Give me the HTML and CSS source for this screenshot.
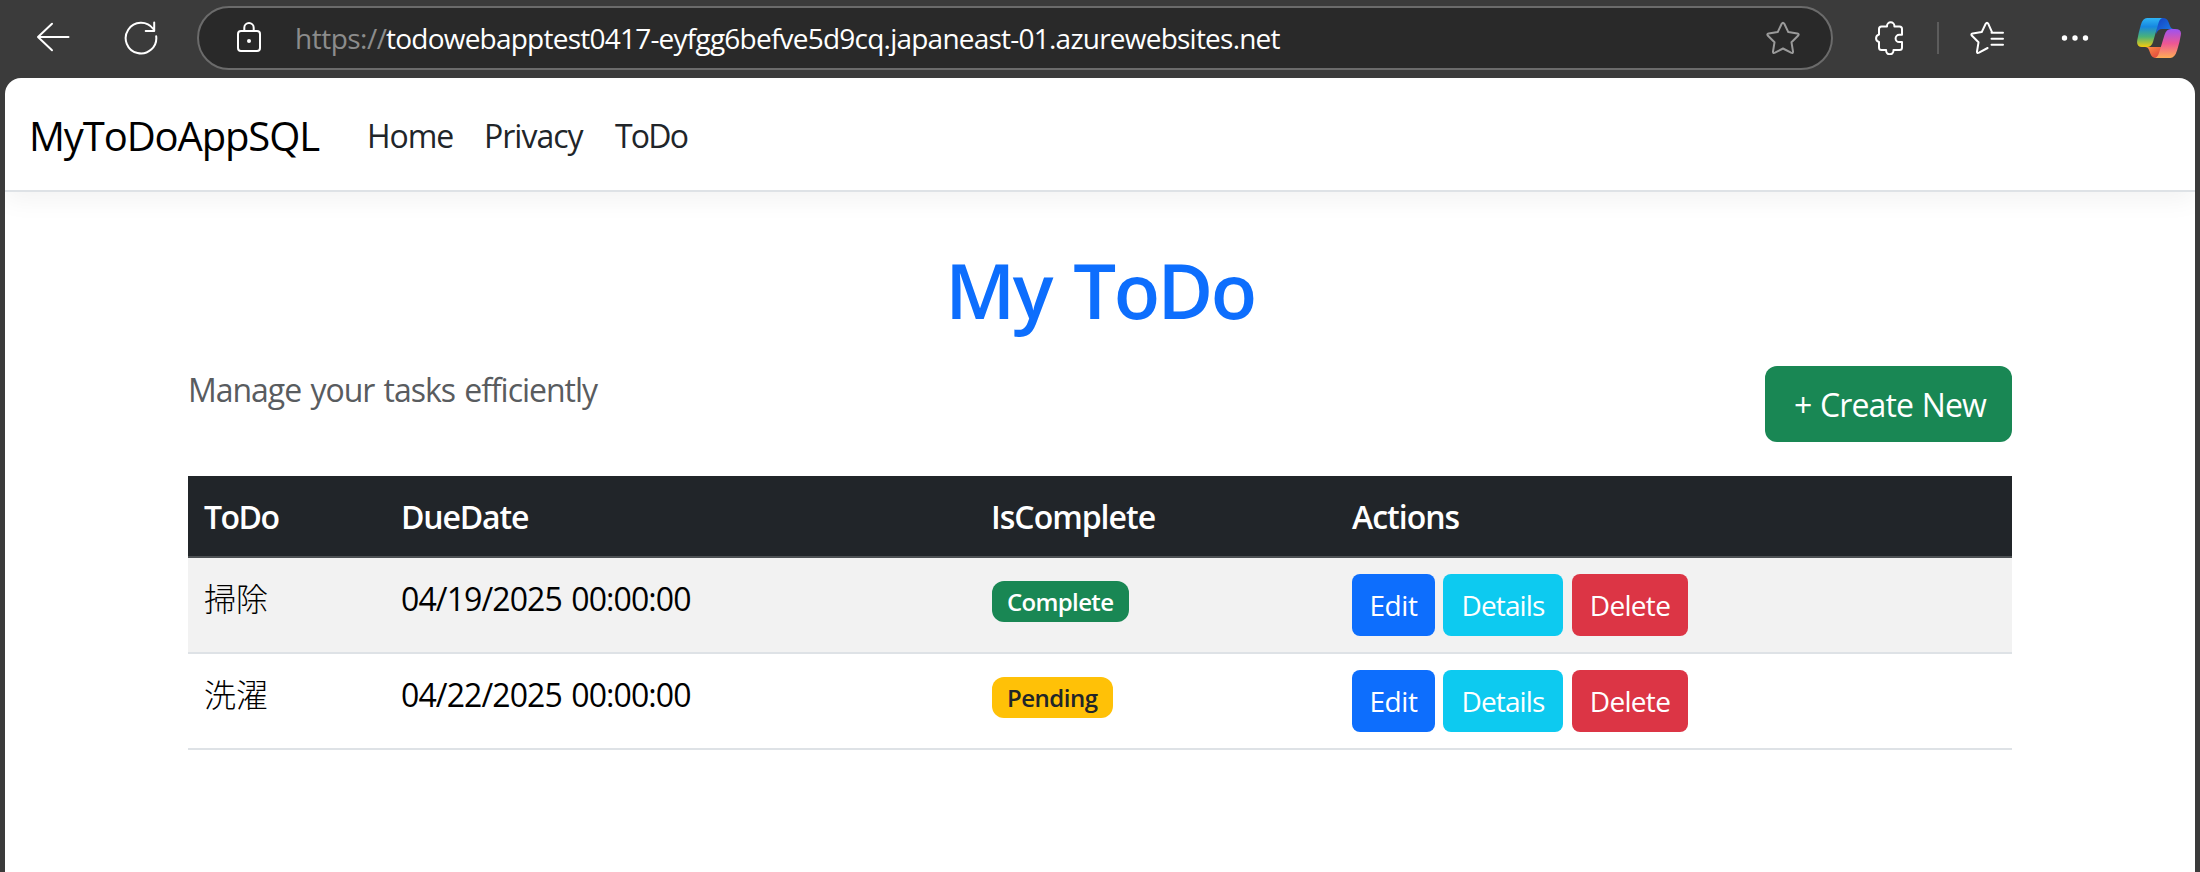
FILE: index.html
```html
<!DOCTYPE html>
<html lang="en">
<head>
<meta charset="utf-8">
<title>My ToDo</title>
<link rel="stylesheet" href="styles.css">
</head>
<body>
<div class="toolbar">
  <svg class="icon back" viewBox="0 0 34 32"><path d="M16 1.800 2 15l14 13.200M2 15h30.500"/></svg>
  <svg class="icon reload" viewBox="0 0 34 34"><path d="M32.200 15.300A15.300 15.300 0 1 1 29.300 8M30.200 1.500V10h-8.500"/></svg>
  <div class="address">
    <svg class="icon lock" viewBox="0 0 26 32"><rect x="2" y="9" width="22" height="20" rx="3"/><path d="M8.300 9V5.700a4.700 4.700 0 0 1 9.400 0V9"/><circle class="dot" cx="13" cy="19" r="2"/></svg>
    <span class="scheme">https://</span><span class="host">todowebapptest0417-eyfgg6befve5d9cq.japaneast-01.azurewebsites.net</span>
    <svg class="icon star" viewBox="0 0 34 34"><path d="M15.700 2.800q1.300-2.200 2.600 0l4 8.300 9 1.400q2.300.5.700 2.300l-6.500 6.500 1.500 9q.2 2.400-2 1.400l-8-4.200-8 4.200q-2.200 1-2-1.400l1.500-9L2 14.800Q.4 13 2.700 12.500l9-1.400z"/></svg>
  </div>
  <svg class="icon puzzle" viewBox="0 0 30 34"><path d="M5 8q0-2.500 2.500-2.500H13V5a3.700 3.700 0 0 1 7.400 0v.5h5.100Q28 5.500 28 8v5.800h-2.800a3.600 3.600 0 0 0 0 7.200H28v5.500q0 2.500-2.500 2.500h-6v.6a3.700 3.700 0 0 1-7.400 0V29H7.500Q5 29 5 26.500V21a3.800 3.800 0 0 1 0-7.400z"/></svg>
  <span class="divider"></span>
  <svg class="icon favorites" viewBox="0 0 34 34"><path d="M22 11.100 18.300 2.800q-1.300-2.200-2.600 0l-4 8.300-9 1.400q-2.300.5-.7 2.300l6.500 6.500L7 30.500q-.2 2.200 2 1.200l8.600-4.700M21.500 11.800H33M21.500 17.700H33M21.500 23.700H33"/></svg>
  <svg class="more" viewBox="0 0 28 6"><circle cx="3.500" cy="3" r="2.700"/><circle cx="14" cy="3" r="2.700"/><circle cx="24.500" cy="3" r="2.700"/></svg>
  <svg class="copilot" viewBox="0 0 44 40">
    <defs>
      <linearGradient id="blue" x1="0" y1="0" x2="0" y2="1"><stop offset="0" stop-color="#2fb4f5"/><stop offset=".3" stop-color="#1688e0"/><stop offset=".65" stop-color="#4bb277"/><stop offset="1" stop-color="#f5cb0c"/></linearGradient>
      <linearGradient id="navy" x1="0" y1="0" x2="1" y2="1"><stop offset="0" stop-color="#1540c0"/><stop offset="1" stop-color="#1b83ea"/></linearGradient>
      <linearGradient id="pink" x1="0" y1="0" x2="0" y2="1"><stop offset="0" stop-color="#9c52f2"/><stop offset=".5" stop-color="#ee5793"/><stop offset="1" stop-color="#ffad55"/></linearGradient>
      <linearGradient id="red" x1="0" y1="0" x2="1" y2="1"><stop offset="0" stop-color="#ff9147"/><stop offset="1" stop-color="#dc3b3b"/></linearGradient>
    </defs>
    <path fill="url(#navy)" d="M20 0h6q4 0 5.500 4l1.500 4q1 3 4 3H25q-4 0-6 5z"/>
    <path fill="url(#red)" d="M8 29q3 0 4 3l1.500 4q1.500 4 5.500 4h3l4-11z"/>
    <path fill="url(#blue)" d="M10 0h16q-3 0-4.500 5L16 24q-1.500 5-6 5H5q-6 0-4.700-7 1.200-7 3.500-15Q5.800 0 10 0z"/>
    <path fill="url(#pink)" d="M34 11h4q7 0 5.800 6-1 7-3.600 15-2.400 8-7 8H17q3.500 0 5-5l5.500-18q1.700-6 6.500-6z"/>
  </svg>
</div>
<div class="page">
  <nav class="navbar">
    <a class="brand">MyToDoAppSQL</a>
    <a class="link home">Home</a>
    <a class="link privacy">Privacy</a>
    <a class="link todo">ToDo</a>
  </nav>
  <main class="container">
    <h1 class="title">My ToDo</h1>
    <div class="intro">
      <p class="lead">Manage your tasks efficiently</p>
      <a class="create">+ Create New</a>
    </div>
    <table class="table">
      <thead>
        <tr><th class="col-todo">ToDo</th><th class="col-due">DueDate</th><th class="col-state">IsComplete</th><th class="col-actions">Actions</th></tr>
      </thead>
      <tbody>
        <tr class="striped"><td class="kanji">掃除</td><td class="date">04/19/2025 00:00:00</td><td><span class="badge complete">Complete</span></td>
          <td><div class="actions"><a class="btn edit">Edit</a><a class="btn details">Details</a><a class="btn delete">Delete</a></div></td></tr>
        <tr><td class="kanji">洗濯</td><td class="date">04/22/2025 00:00:00</td><td><span class="badge pending">Pending</span></td>
          <td><div class="actions"><a class="btn edit">Edit</a><a class="btn details">Details</a><a class="btn delete">Delete</a></div></td></tr>
      </tbody>
    </table>
  </main>
</div>
</body>
</html>
```
FILE: styles.css
```css
* { box-sizing: border-box; }
body {
  margin: 0;
  height: 872px;
  overflow: hidden;
  display: flex;
  flex-direction: column;
  background: #3b3b3b;
  color: #212529;
  font-family: "Open Sans", "Noto Sans CJK JP", sans-serif;
  font-size: 32px;
  line-height: 48px;
}
.toolbar { height: 78px; flex: none; display: flex; align-items: center; padding-bottom: 2px; }
.toolbar svg, .divider { flex: none; }
.icon { fill: none; stroke: #fff; stroke-width: 2; stroke-linecap: round; stroke-linejoin: round; }
.back { width: 34px; height: 32px; margin-left: 36px; }
.reload { width: 34px; height: 34px; margin-left: 54px; }
.address {
  width: 1636px; height: 64px; margin-left: 39px; padding-left: 37px;
  display: flex; align-items: center; flex: none;
  background: #292929; border: 2px solid #6b6b6b; border-radius: 32px;
  font-size: 28px; line-height: 40px; color: #fff; white-space: nowrap;
}
.lock { width: 26px; height: 32px; margin-right: 33px; }
.lock .dot { fill: #fff; stroke: none; }
.scheme { width: 91px; padding-bottom: 1px; color: #8c8c8c; letter-spacing: -.5px; }
.host { padding-bottom: 1px; letter-spacing: -.77px; }
.star { width: 34px; height: 34px; margin-left: auto; margin-right: 31px; stroke: #9a9a9a; }
.puzzle { width: 30px; height: 34px; margin-left: 41px; }
.divider { width: 2px; height: 32px; margin-left: 33px; background: #5c5c5c; }
.favorites { width: 34px; height: 34px; margin-left: 31px; }
.more { width: 28px; height: 6px; margin-left: 57px; fill: #fff; }
.copilot { width: 44px; height: 40px; margin-left: 48px; }
.page { flex: 1; margin: 0 5px; background: #fff; border-radius: 16px 16px 0 0; overflow: hidden; }
.navbar {
  height: 114px; padding: 3px 0 0 24px; display: flex; align-items: center;
  border-bottom: 2px solid #dee2e6; box-shadow: 0 8px 24px rgba(0, 0, 0, .05);
  white-space: nowrap;
}
.brand { width: 338px; font-size: 40px; line-height: 60px; letter-spacing: -1.12px; color: #000; }
.home { width: 117px; letter-spacing: -1.1px; }
.privacy { width: 131px; letter-spacing: -1px; }
.todo { letter-spacing: -1.8px; }
.container { width: 1824px; margin: 0 auto; padding-top: 50px; }
.title { margin: 0 0 18px; height: 106px; text-align: center; font-size: 76px; line-height: 96px; font-weight: 600; letter-spacing: -2.5px; word-spacing: 5px; color: #0d6efd; }
.intro { display: flex; justify-content: space-between; align-items: flex-start; height: 110px; }
.lead { margin: 0; letter-spacing: -1.03px; word-spacing: 2px; color: #595c5f; }
.create { width: 247px; height: 76px; padding-left: 3px; line-height: 78px; text-align: center; letter-spacing: -.85px; word-spacing: 1px; background: #198754; border-radius: 12px; color: #fff; }
.table { width: 100%; table-layout: fixed; border-collapse: separate; border-spacing: 0; }
.table th { height: 82px; padding: 2px 16px 0; text-align: left; font-weight: 600; letter-spacing: -1px; color: #fff; background: #212529; border-bottom: 2px solid #4d5154; }
.table td { height: 96px; padding: 16px; vertical-align: top; color: #000; border-bottom: 2px solid #dee2e6; }
.table .striped td { background: #f2f2f2; }
.table .col-todo { width: 198px; letter-spacing: -1.5px; }
.table .col-due { width: 590px; padding-left: 15px; letter-spacing: -1.15px; }
.table .col-state { width: 360px; padding-left: 15px; letter-spacing: -1px; }
.table .kanji { padding-top: 15px; font-family: "Noto Sans CJK JP", sans-serif; font-weight: 300; }
.table .date { padding: 17px 0 0 15px; letter-spacing: -.9px; word-spacing: 2px; }
.badge { display: block; height: 41px; line-height: 41px; margin-top: 7px; padding-left: 15px; font-size: 24px; font-weight: 600; border-radius: 12px; }
.complete { width: 137px; letter-spacing: -.65px; background: #198754; color: #fff; }
.pending { width: 121px; letter-spacing: -.5px; background: #ffc107; color: #212529; }
.actions { display: flex; }
.btn { height: 62px; line-height: 62px; text-align: center; font-size: 28px; border-radius: 8px; color: #fff; }
.edit { width: 83px; letter-spacing: -.4px; background: #0d6efd; }
.details { width: 120px; margin: 0 9px 0 8px; letter-spacing: -.9px; background: #0dcaf0; }
.delete { width: 116px; letter-spacing: -.7px; background: #dc3545; }
```
